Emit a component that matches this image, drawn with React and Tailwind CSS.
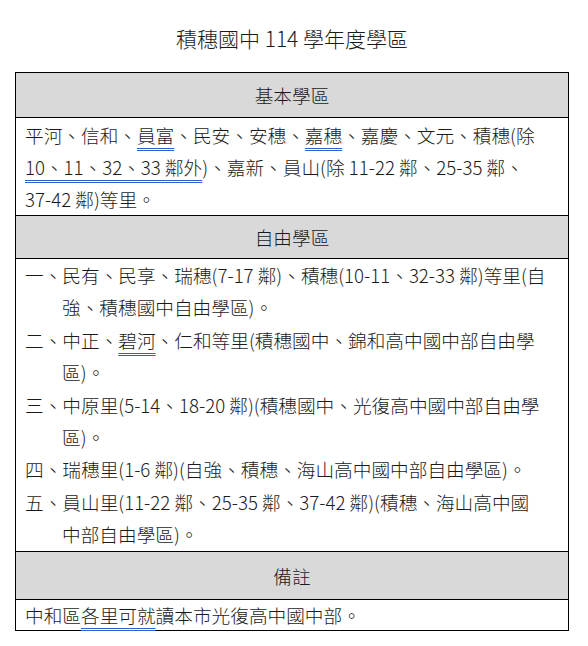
import React from "react";

const U = ({ children }) => (
  <span className="underline decoration-double decoration-[#2f62d0] decoration-1 underline-offset-[5px]">
    {children}
  </span>
);

const Line = ({ children, indent }) => (
  <div className={"whitespace-nowrap " + (indent ? "pl-[37px]" : "")}>{children}</div>
);

export default function App() {
  return (
    <div
      className="bg-white w-[588px] h-[646px] text-[#1a1a1a] font-light pt-[21px]"
      style={{ fontFamily: '"Noto Sans CJK TC", "Noto Sans", sans-serif' }}
    >
      <div className="ml-[15px] w-[554px]">
        <div className="text-center text-[21px] leading-[34px] mb-[17px]">積穗國中 114 學年度學區</div>
        <div className="border border-black text-[18.67px]">
          <div className="h-[44px] bg-[#d9d9d9] flex items-center justify-center">基本學區</div>
          <div className="border-t border-black px-[9px] pt-[1px] leading-[32px] h-[98px]">
            <Line>
              平河、信和、<U>員富</U>、民安、安穗、<U>嘉穗</U>、嘉慶、文元、積穗(除
            </Line>
            <Line>
              <U>10、11、32、33 鄰外</U>)、嘉新、員山(除 11-22 鄰、25-35 鄰、
            </Line>
            <Line>37-42 鄰)等里。</Line>
          </div>
          <div className="border-t border-black h-[43px] bg-[#d9d9d9] flex items-center justify-center">自由學區</div>
          <div className="border-t border-black px-[9px] leading-[32.4px] h-[293px]">
            <Line>一、民有、民享、瑞穗(7-17 鄰)、積穗(10-11、32-33 鄰)等里(自</Line>
            <Line indent>強、積穗國中自由學區)。</Line>
            <Line>
              二、中正、<U>碧河</U>、仁和等里(積穗國中、錦和高中國中部自由學
            </Line>
            <Line indent>區)。</Line>
            <Line>三、中原里(5-14、18-20 鄰)(積穗國中、光復高中國中部自由學</Line>
            <Line indent>區)。</Line>
            <Line>四、瑞穗里(1-6 鄰)(自強、積穗、海山高中國中部自由學區)。</Line>
            <Line>五、員山里(11-22 鄰、25-35 鄰、37-42 鄰)(積穗、海山高中國</Line>
            <Line indent>中部自由學區)。</Line>
          </div>
          <div className="border-t border-black h-[48px] bg-[#d9d9d9] flex items-center justify-center">備註</div>
          <div className="border-t border-black px-[9px] leading-[30px] h-[31px]">
            <Line>
              中和區<U>各里可就</U>讀本市光復高中國中部。
            </Line>
          </div>
        </div>
      </div>
    </div>
  );
}
